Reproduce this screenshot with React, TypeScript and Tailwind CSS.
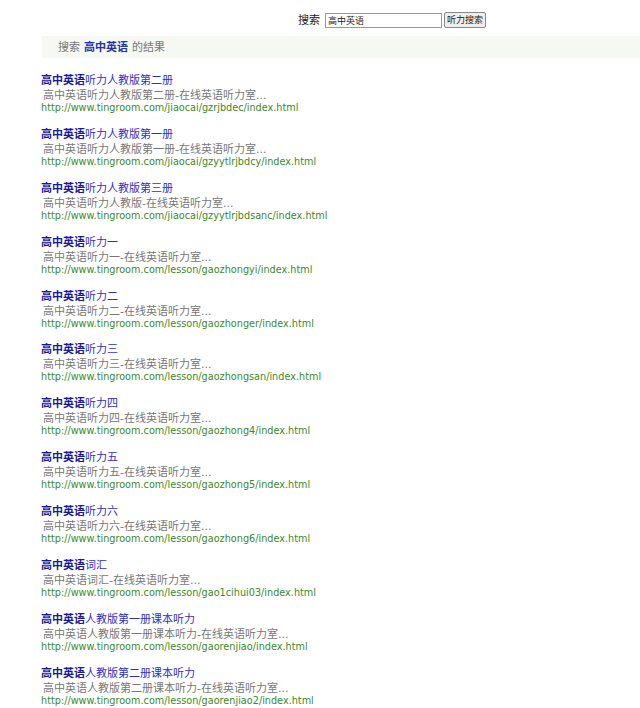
import React from 'react';

interface ResultItem {
  title: string;
  desc: string;
  url: string;
}

const keyword = '高中英语';

const results: ResultItem[] = [
  { title: '听力人教版第二册', desc: '高中英语听力人教版第二册-在线英语听力室...', url: 'http://www.tingroom.com/jiaocai/gzrjbdec/index.html' },
  { title: '听力人教版第一册', desc: '高中英语听力人教版第一册-在线英语听力室...', url: 'http://www.tingroom.com/jiaocai/gzyytlrjbdcy/index.html' },
  { title: '听力人教版第三册', desc: '高中英语听力人教版-在线英语听力室...', url: 'http://www.tingroom.com/jiaocai/gzyytlrjbdsanc/index.html' },
  { title: '听力一', desc: '高中英语听力一-在线英语听力室...', url: 'http://www.tingroom.com/lesson/gaozhongyi/index.html' },
  { title: '听力二', desc: '高中英语听力二-在线英语听力室...', url: 'http://www.tingroom.com/lesson/gaozhonger/index.html' },
  { title: '听力三', desc: '高中英语听力三-在线英语听力室...', url: 'http://www.tingroom.com/lesson/gaozhongsan/index.html' },
  { title: '听力四', desc: '高中英语听力四-在线英语听力室...', url: 'http://www.tingroom.com/lesson/gaozhong4/index.html' },
  { title: '听力五', desc: '高中英语听力五-在线英语听力室...', url: 'http://www.tingroom.com/lesson/gaozhong5/index.html' },
  { title: '听力六', desc: '高中英语听力六-在线英语听力室...', url: 'http://www.tingroom.com/lesson/gaozhong6/index.html' },
  { title: '词汇', desc: '高中英语词汇-在线英语听力室...', url: 'http://www.tingroom.com/lesson/gao1cihui03/index.html' },
  { title: '人教版第一册课本听力', desc: '高中英语人教版第一册课本听力-在线英语听力室...', url: 'http://www.tingroom.com/lesson/gaorenjiao/index.html' },
  { title: '人教版第二册课本听力', desc: '高中英语人教版第二册课本听力-在线英语听力室...', url: 'http://www.tingroom.com/lesson/gaorenjiao2/index.html' },
];

export default function App() {
  return (
    <div className="w-[640px] h-[708px] bg-white overflow-hidden font-['DejaVu_Sans','Noto_Sans_CJK_SC',sans-serif] text-[11px] leading-[13px]">
      <div className="flex items-center justify-end pr-[154px] pt-[12px] h-[28px]">
        <span className="text-[11px] text-[#222] mr-[5px]">搜索</span>
        <input
          type="text"
          defaultValue={keyword}
          className="w-[117px] h-[15px] border border-[#999] px-[2px] text-[9px] text-[#222] outline-none"
        />
        <button className="ml-[2px] h-[16px] w-[42px] border border-[#888] bg-[#eeeeee] text-[9px] text-[#222] rounded-[2px]">
          听力搜索
        </button>
      </div>

      <div className="ml-[42px] mt-[8px] h-[22px] bg-[#f5f8f3] flex items-center pl-[16px] text-[#777]">
        搜索 <span className="mx-[4px] font-bold text-[#2233aa]">{keyword}</span> 的结果
      </div>

      <div className="pl-[41px] pt-[16px]">
        {results.map((item) => (
          <div key={item.url} className="h-[53.9px]">
            <div className="text-[#2f2fc8]">
              <span className="font-bold text-[#1a1a99]">{keyword}</span>
              {item.title}
            </div>
            <div className="pl-[2px] text-[#777] mt-[2px]">{item.desc}</div>
            <div className="text-[#3a8a2a] text-[9.7px] leading-[12px]">{item.url}</div>
          </div>
        ))}
      </div>
    </div>
  );
}
